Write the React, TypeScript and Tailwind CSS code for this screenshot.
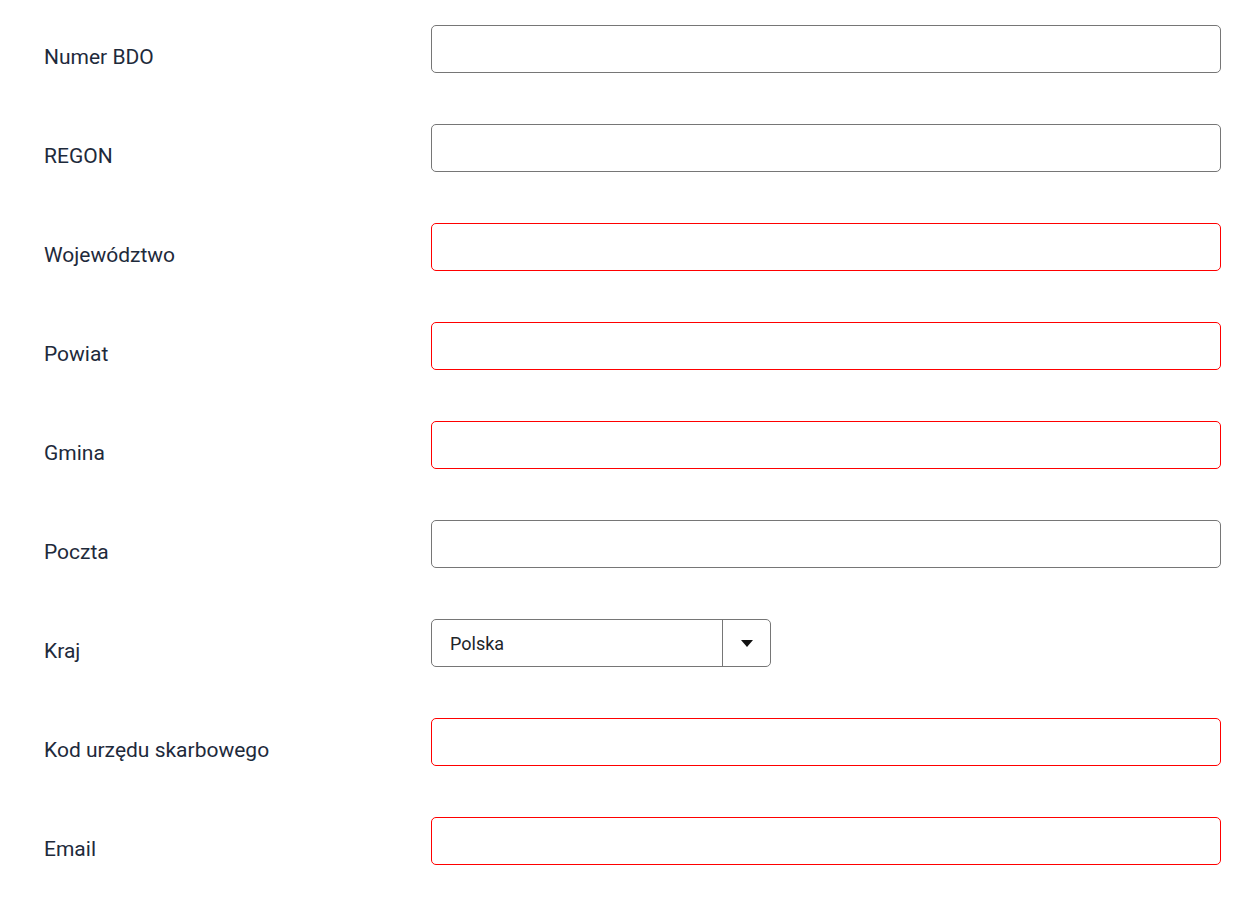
const fields: { label: string; required?: boolean; select?: string }[] = [
  { label: "Numer BDO" },
  { label: "REGON" },
  { label: "Województwo", required: true },
  { label: "Powiat", required: true },
  { label: "Gmina", required: true },
  { label: "Poczta" },
  { label: "Kraj", select: "Polska" },
  { label: "Kod urzędu skarbowego", required: true },
  { label: "Email", required: true },
];

function CountrySelect({ value }: { value: string }) {
  return (
    <div className="flex h-12 w-[340px] rounded-[5px] border border-[#767676] bg-white">
      <div className="flex flex-1 items-center pl-[18px] text-[18px] text-[#212529]">{value}</div>
      <div className="flex w-12 items-center justify-center border-l border-[#767676]">
        <svg width="12" height="7" viewBox="0 0 12 7">
          <path d="M0 0h12L6 7z" fill="#111" />
        </svg>
      </div>
    </div>
  );
}

export default function App() {
  return (
    <div className="min-h-screen bg-white pt-[25px] pl-[44px] pr-[37px] font-['Roboto',sans-serif]">
      {fields.map((f) => (
        <div key={f.label} className="mb-[51px] flex items-start">
          <label className="w-[387px] shrink-0 pt-[20px] text-[21px] leading-6 text-[#1e2a3b]">{f.label}</label>
          {f.select ? (
            <CountrySelect value={f.select} />
          ) : (
            <input
              type="text"
              className={
                "h-12 flex-1 rounded-[5px] border bg-white px-4 outline-none " +
                (f.required ? "border-[#ff0000]" : "border-[#767676]")
              }
            />
          )}
        </div>
      ))}
    </div>
  );
}
